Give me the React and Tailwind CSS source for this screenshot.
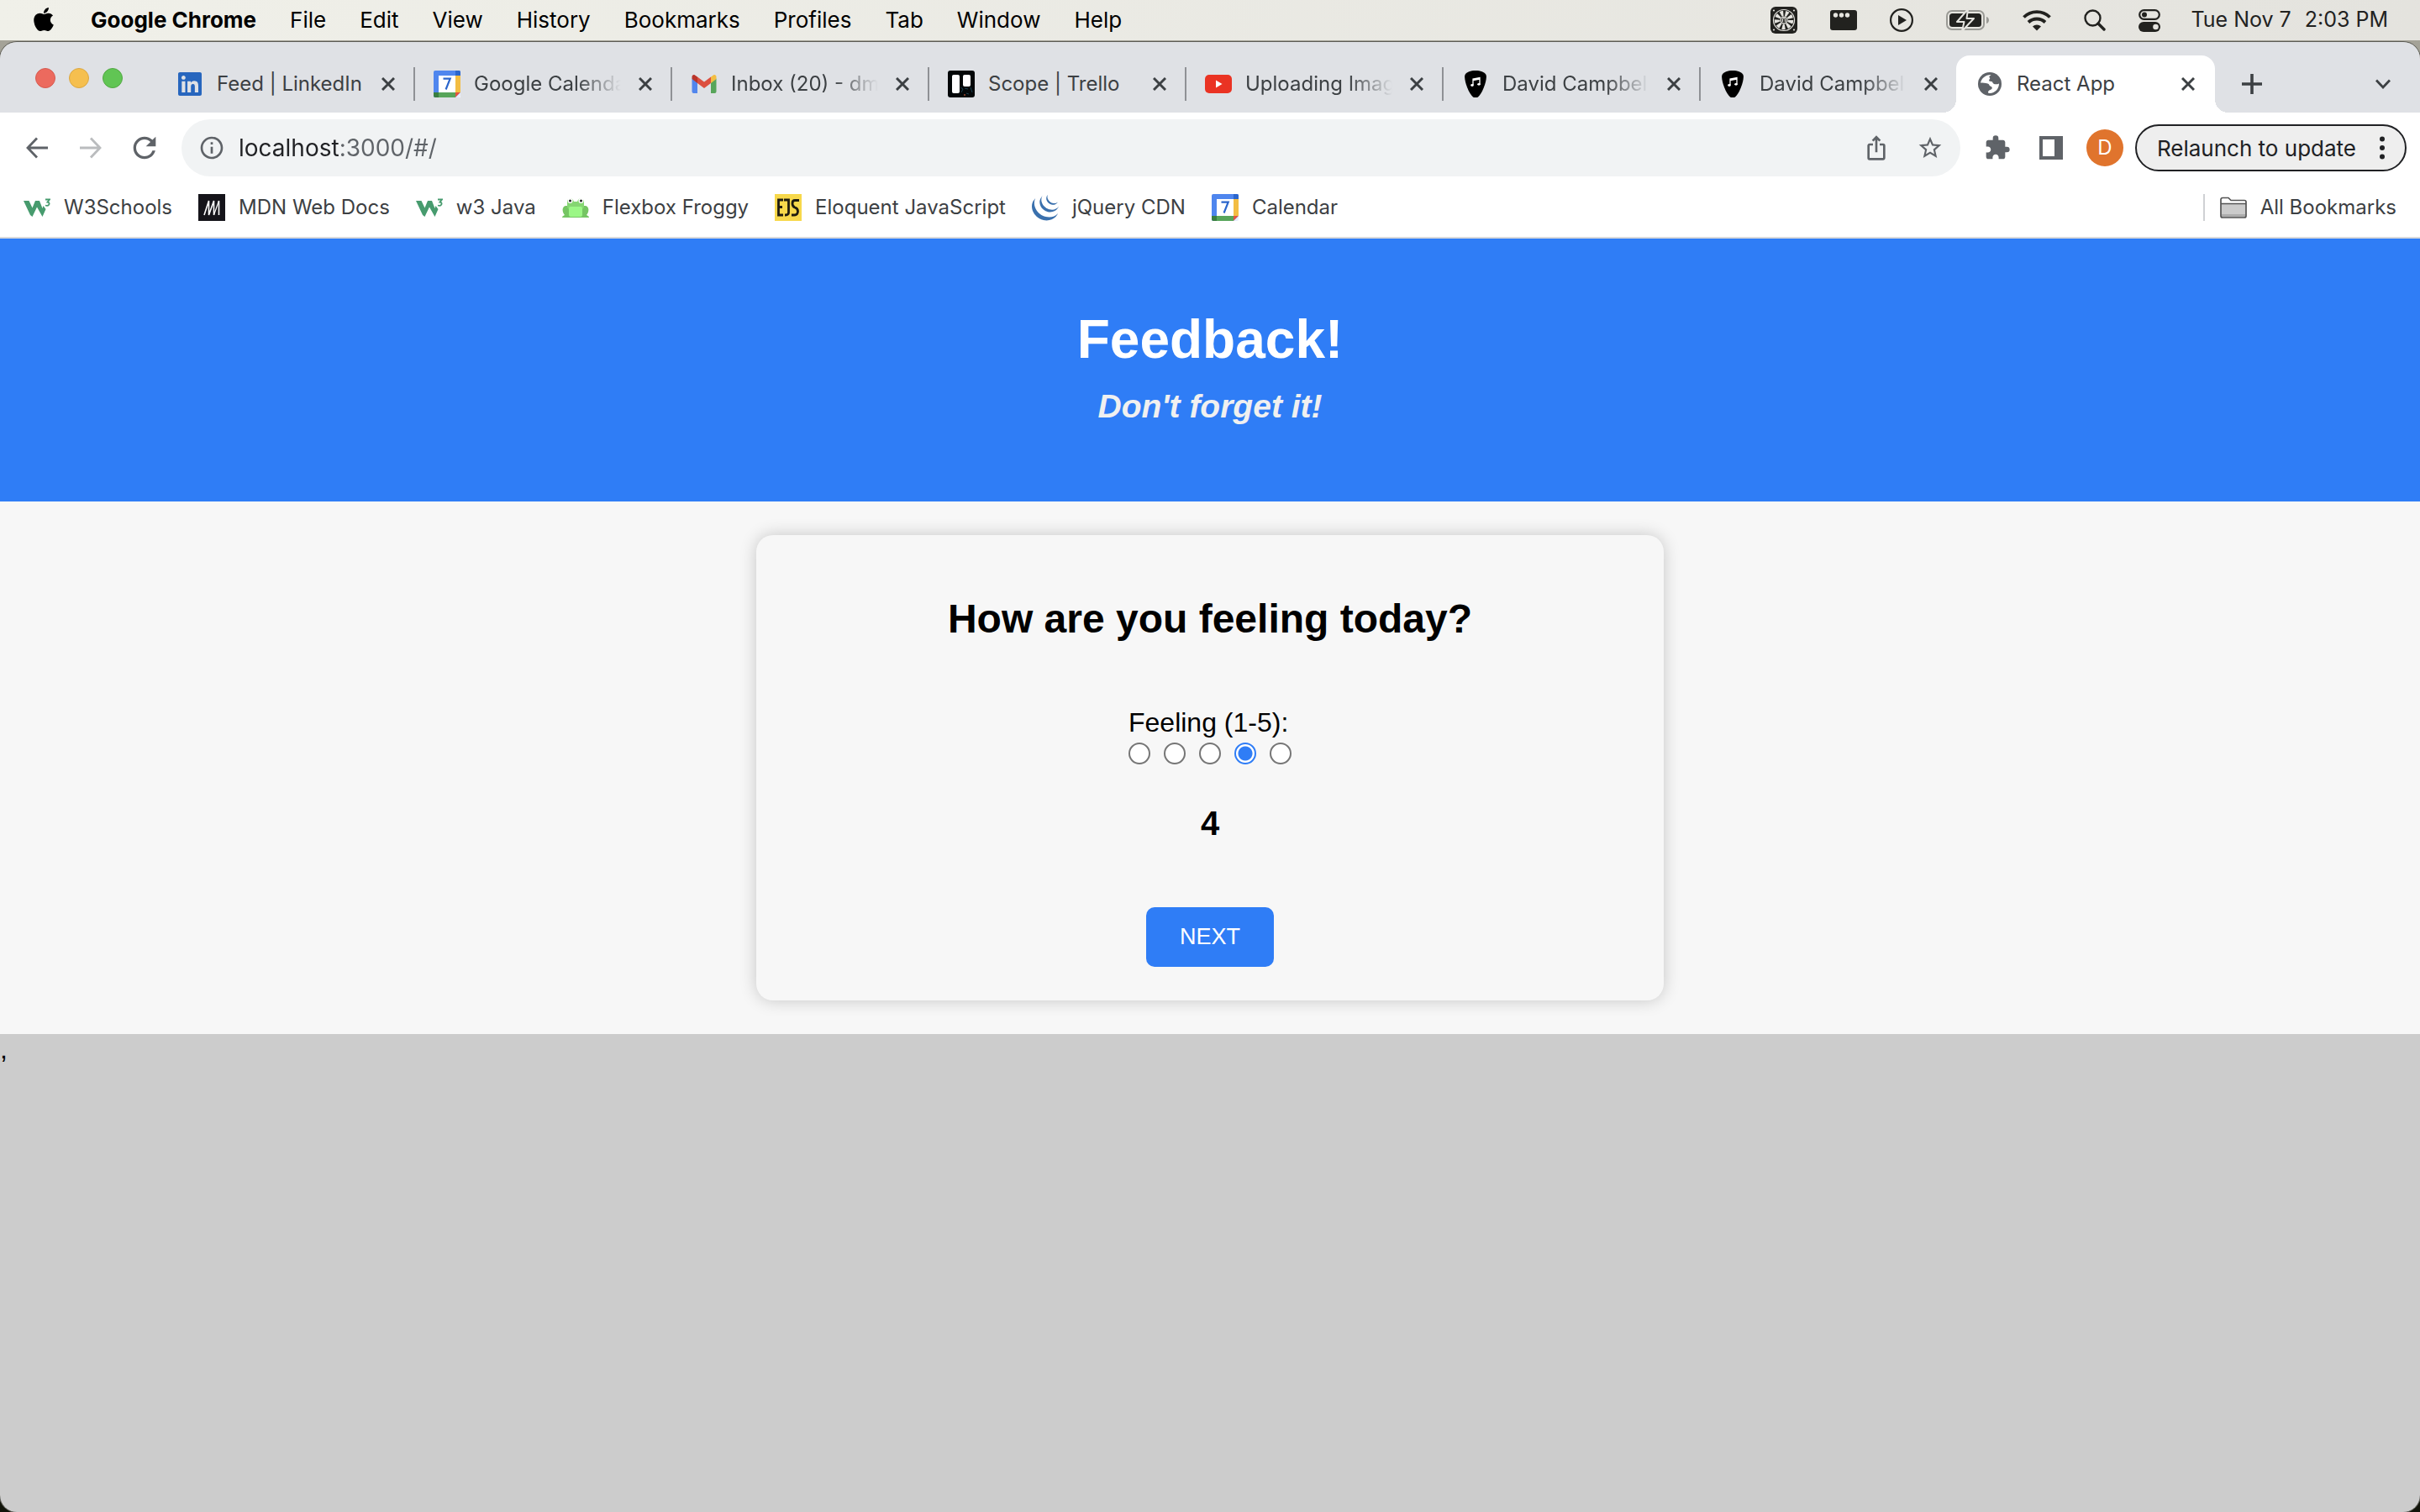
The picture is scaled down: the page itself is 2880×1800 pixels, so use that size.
import { useState } from "react";
import { FaApple, FaLinkedin } from "react-icons/fa";
import {
  MdExtension,
  MdInfoOutline,
  MdIosShare,
  MdRefresh,
  MdStarBorder,
} from "react-icons/md";
import { SiJquery } from "react-icons/si";

function GoogleCalendarIcon() {
  return (
    <svg viewBox="0 0 32 32" className="size-8 shrink-0" aria-hidden="true">
      <rect width="32" height="32" rx="2" fill="#4f86ee" />
      <path d="M26 0h4a2 2 0 0 1 2 2v4h-6z" fill="#2b66cc" />
      <path d="M26 6h6v20h-6z" fill="#f3bd42" />
      <path d="M6 26h20v6H6z" fill="#57a55a" />
      <path d="M0 26h6v6H2a2 2 0 0 1-2-2z" fill="#397e41" />
      <path d="M26 26h6l-6 6z" fill="#e25241" />
      <path d="M32 26v6h-6z" fill="#fff" fillOpacity="0.85" />
      <rect x="6" y="6" width="20" height="20" fill="#fff" />
      <path d="M11.5 9.6h8.2L14.6 22.5" fill="none" stroke="#2b66cc" strokeWidth="2.2" />
    </svg>
  );
}

function GmailIcon() {
  return (
    <svg viewBox="0 0 32 32" className="size-8 shrink-0" aria-hidden="true">
      <path d="M1.5 9.5 8 14v13H3.5a2 2 0 0 1-2-2z" fill="#5286ed" />
      <path d="M30.500 9.500 24 14v13h4.500a2 2 0 0 0 2-2z" fill="#57a55a" />
      <path d="M24 7.500 27 5.500c1.500-1 3.500 0 3.500 2V10L24 15z" fill="#f3bd42" />
      <path d="M8 7.500 16 13.500l8-6V15l-8 6-8-6z" fill="#dc4f3f" />
      <path d="M1.500 7.500c0-2 2-3 3.500-2L8 7.500V15l-6.500-5z" fill="#b9352b" />
    </svg>
  );
}

function TrelloIcon() {
  return (
    <svg viewBox="0 0 32 32" className="size-8 shrink-0" aria-hidden="true">
      <rect width="32" height="32" rx="3" fill="#030708" />
      <path d="M15 20l3 2-2 4M20 21l4 1M27 20l2 6M22 27l3 1" stroke="#1c4050" strokeWidth="1" fill="none" />
      <rect x="5" y="5" width="9" height="22" rx="2" fill="#fff" />
      <rect x="18" y="5" width="9" height="14" rx="2" fill="#fff" />
      <circle cx="20" cy="29" r="1" fill="#a04a30" />
    </svg>
  );
}

function YoutubeIcon() {
  return (
    <svg viewBox="0 0 32 32" className="size-8 shrink-0" aria-hidden="true">
      <rect y="5" width="32" height="22" rx="5" fill="#ea3323" />
      <path d="M13 11.500v9l7.500-4.500z" fill="#fff" />
    </svg>
  );
}

function PickIcon() {
  return (
    <svg viewBox="0 0 32 32" className="size-8 shrink-0" aria-hidden="true">
      <path d="M16 0c6 0 10.500 1.500 12.500 5 2 5-4 22-9.500 26.500-1.500 1-4.500 1-6 0C7.500 27 1.500 10 3.500 5 5.500 1.500 10 0 16 0z" fill="#000" />
      <path d="M13 17V10l8-1.500v7.500M13 11.500l8-1.500" stroke="#fff" strokeWidth="1.300" fill="none" />
      <ellipse cx="12" cy="17.500" rx="1.800" ry="1.400" fill="#fff" />
      <ellipse cx="20" cy="16.300" rx="1.800" ry="1.400" fill="#fff" />
    </svg>
  );
}

function GlobeIcon() {
  return (
    <svg viewBox="0 0 28 28" className="mx-0.5 size-7 shrink-0" aria-hidden="true">
      <circle cx="14" cy="14" r="14" fill="#5f6368" />
      <path
        d="M3 12.500C4 7.500 8.500 3 15.500 3C13.500 5 12.500 5.500 14 6.500C15 7.500 13 8.500 13 10C14 11.500 17 10 17.500 12.500C18.500 14.500 22 15 25 13.500C25 19.500 20.500 24.800 14 25C12.500 25 12 24.500 12 23.500C12.500 22 13 21.500 15.500 20.500C18 19 16.500 17 14.500 16.500C13 15.500 13.500 14 11.500 13.500C8.500 12.800 6 12.800 3 12.500Z"
        fill="#fff"
      />
    </svg>
  );
}

function W3Icon() {
  return (
    <svg viewBox="0 0 32 32" className="size-8 shrink-0" aria-hidden="true">
      <path d="M0 8h6.500l4 8.500L14 8h5l3.500 9 1-3 3 4-4 9-6.500-11.500L10.500 27 8 25z" fill="#479b6e" />
      <path d="M26 6.500h5l-2.500 3c3.500.5 2.500 5.500-2.500 4" fill="none" stroke="#479b6e" strokeWidth="1.800" />
    </svg>
  );
}

function MdnIcon() {
  return (
    <svg viewBox="0 0 32 32" className="size-8 shrink-0" aria-hidden="true">
      <rect width="32" height="32" fill="#15141a" />
      <path d="M7 25 12.500 8V25L18.500 8V25M24.500 8V25" fill="none" stroke="#fff" strokeWidth="1.600" />
      <path d="M18.500 25 24.500 8" fill="none" stroke="#fff" strokeWidth="1.200" />
    </svg>
  );
}

function FrogIcon() {
  return (
    <svg viewBox="0 0 32 32" className="size-8 shrink-0" aria-hidden="true">
      <path d="M0 28c0-2 2-2 3-3-4-5-3-12 3-11h20c6-1 7 6 3 11 1 1 3 1 3 3z" fill="#75c563" />
      <path d="M6 8a4 4 0 0 1 7-1l1 2h4l1-2a4 4 0 0 1 7 1v8l-3 3H9l-3-3z" fill="#85d672" />
      <rect x="8" y="15" width="16" height="12" rx="2" fill="#9bf786" />
      <circle cx="9.500" cy="8" r="3" fill="#fff" />
      <circle cx="22.500" cy="8" r="3" fill="#fff" />
      <circle cx="9.500" cy="8" r="1.500" fill="#222" />
      <circle cx="22.500" cy="8" r="1.500" fill="#222" />
    </svg>
  );
}

function EjsIcon() {
  return (
    <svg viewBox="0 0 32 32" className="size-8 shrink-0" aria-hidden="true">
      <rect width="32" height="32" fill="#f7d84b" />
      <path d="M10 7H4.500v18H10M4.500 15.500H9M11 7h5.500v15c0 2-1.500 3-4.500 3M29 7.500h-5c-4 0-4 7 0 8.500 5 1.500 4.500 9-1 9h-3" fill="none" stroke="#1f1c10" strokeWidth="2.800" />
    </svg>
  );
}

function FolderIcon() {
  return (
    <svg viewBox="0 0 32 32" className="size-8 shrink-0" aria-hidden="true">
      <path d="M1 12h30v14a2 2 0 0 1-2 2H3a2 2 0 0 1-2-2z" fill="#cbcbcb" />
      <path d="M2 24h28v3H2z" fill="#adadad" />
      <path d="M1 26V6.500a2 2 0 0 1 2-2h7l3 3h16a2 2 0 0 1 2 2V26a2 2 0 0 1-2 2H3a2 2 0 0 1-2-2zM1 11.500h30" fill="none" stroke="#545454" strokeWidth="1.700" />
    </svg>
  );
}

function FanIcon() {
  return (
    <svg viewBox="0 0 32 32" className="size-8" aria-hidden="true">
      <rect width="32" height="32" rx="6" fill="#22221f" />
      <circle cx="16" cy="16" r="12.500" fill="none" stroke="#e5e4df" strokeWidth="1.200" />
      <circle cx="16" cy="16" r="8" fill="none" stroke="#e5e4df" strokeWidth="6.500" strokeDasharray="3.300 2.280" />
      <circle cx="16" cy="16" r="3.800" fill="#22221f" stroke="#e5e4df" strokeWidth="1.300" />
      <path d="M14.500 18v-3a1.500 1.500 0 0 1 3 0v3" fill="none" stroke="#e5e4df" strokeWidth="1.200" />
      <g fill="#e5e4df">
        <circle cx="4" cy="4.500" r="1.100" />
        <circle cx="28" cy="4.500" r="1.100" />
        <circle cx="4" cy="27.500" r="1.100" />
        <circle cx="28" cy="27.500" r="1.100" />
      </g>
    </svg>
  );
}

function DotsWindowIcon() {
  return (
    <svg viewBox="0 0 32 24" className="h-6 w-8" aria-hidden="true">
      <rect width="32" height="24" rx="3" fill="#22221f" />
      <circle cx="6.500" cy="6" r="2.700" fill="#e5e4df" />
      <circle cx="13.500" cy="6" r="2.700" fill="#e5e4df" />
      <circle cx="20.500" cy="6" r="2.700" fill="#e5e4df" />
    </svg>
  );
}

function PlayIcon() {
  return (
    <svg viewBox="0 0 28 28" className="size-7" aria-hidden="true">
      <circle cx="14" cy="14" r="12.900" fill="none" stroke="#22221f" strokeWidth="2.200" />
      <path d="M10 8v12l10-6z" fill="#22221f" />
    </svg>
  );
}

function BatteryIcon() {
  return (
    <svg viewBox="0 0 52 28" className="h-7 w-[52px]" aria-hidden="true">
      <rect x="1" y="3" width="44" height="22" rx="6" fill="none" stroke="#9a9a95" strokeWidth="2" />
      <rect x="4" y="6" width="38" height="16" rx="3.500" fill="#22221f" />
      <path d="M48 10c4 1 4 7 0 8z" fill="#9a9a95" />
      <path d="M26 1 13 16h8.500L19 27 33 12h-8.500z" fill="#22221f" stroke="#e5e4df" strokeWidth="2" strokeLinejoin="round" />
    </svg>
  );
}

function WifiIcon() {
  return (
    <svg viewBox="0 0 34 26" className="h-[26px] w-[34px]" aria-hidden="true">
      <g fill="none" stroke="#22221f" strokeWidth="3.800">
        <path d="M1.500 9.500a22 22 0 0 1 31 0" />
        <path d="M7 15.500a14.500 14.500 0 0 1 20 0" />
      </g>
      <path d="M12 20.500a7.500 7.500 0 0 1 10 0L17 25.500z" fill="#22221f" />
    </svg>
  );
}

function SearchIcon() {
  return (
    <svg viewBox="0 0 26 26" className="size-[26px]" aria-hidden="true">
      <circle cx="10.500" cy="10.500" r="9" fill="none" stroke="#22221f" strokeWidth="2.400" />
      <path d="M17 17l7 7" stroke="#22221f" strokeWidth="3.400" strokeLinecap="round" />
    </svg>
  );
}

function ControlCenterIcon() {
  return (
    <svg viewBox="0 0 26 28" className="h-7 w-[26px]" aria-hidden="true">
      <rect x="1.200" y="2.200" width="23.600" height="10.600" rx="5.300" fill="none" stroke="#22221f" strokeWidth="2.200" />
      <circle cx="7" cy="7.500" r="3" fill="#22221f" />
      <rect y="16" width="26" height="12" rx="6" fill="#22221f" />
      <circle cx="20.500" cy="22" r="3.300" fill="#e5e4df" />
    </svg>
  );
}

function CloseIcon() {
  return (
    <svg viewBox="0 0 16 16" className="size-4" aria-hidden="true">
      <path d="M1 1l14 14M15 1 1 15" stroke="#3c4043" strokeWidth="3" />
    </svg>
  );
}

function ArrowIcon({ className }) {
  return (
    <svg viewBox="0 0 26 26" className={className} aria-hidden="true">
      <path d="M13 1.500 2 13l11 11.500M2 13h24" fill="none" stroke="currentColor" strokeWidth="2.800" />
    </svg>
  );
}

const menus = ["File", "Edit", "View", "History", "Bookmarks", "Profiles", "Tab", "Window", "Help"];

const tabs = [
  { title: "Feed | LinkedIn", icon: <FaLinkedin className="size-8 shrink-0 text-[#2766be]" /> },
  { title: "Google Calenda", icon: <GoogleCalendarIcon />, fade: true },
  { title: "Inbox (20) - dm", icon: <GmailIcon />, fade: true },
  { title: "Scope | Trello", icon: <TrelloIcon /> },
  { title: "Uploading Imag", icon: <YoutubeIcon />, fade: true },
  { title: "David Campbel", icon: <PickIcon />, fade: true },
  { title: "David Campbel", icon: <PickIcon />, fade: true },
];

const bookmarks = [
  { title: "W3Schools", icon: <W3Icon /> },
  { title: "MDN Web Docs", icon: <MdnIcon /> },
  { title: "w3 Java", icon: <W3Icon /> },
  { title: "Flexbox Froggy", icon: <FrogIcon /> },
  { title: "Eloquent JavaScript", icon: <EjsIcon /> },
  { title: "jQuery CDN", icon: <SiJquery className="size-8 shrink-0 text-[#3a70ad]" /> },
  { title: "Calendar", icon: <GoogleCalendarIcon /> },
];

function MenuBar() {
  return (
    <header className="flex h-12 shrink-0 items-center justify-between bg-linear-to-r from-[#f0f0e9] to-[#e4e3de] pr-[38px] pl-9 text-[26px] text-black">
      <nav className="flex items-center gap-10 pb-0.5" aria-label="Application menu">
        <button aria-label="Apple menu">
          <FaApple className="size-8" />
        </button>
        <button className="font-bold">Google Chrome</button>
        {menus.map((menu) => (
          <button key={menu}>{menu}</button>
        ))}
      </nav>
      <div className="flex items-center">
        <div className="mr-9 flex items-center gap-[39px]">
          <FanIcon />
          <DotsWindowIcon />
          <PlayIcon />
          <BatteryIcon />
          <WifiIcon />
          <SearchIcon />
          <ControlCenterIcon />
        </div>
        <time className="flex gap-4 text-[25px] text-[#22221f]">
          <span>Tue Nov 7</span>
          <span>2:03 PM</span>
        </time>
      </div>
    </header>
  );
}

function Tab({ title, icon, fade, last }) {
  return (
    <div className="flex h-[68px] w-[306px] min-w-0 items-center pl-[22px]">
      {icon}
      <span
        className={
          fade
            ? "ml-4 min-w-0 flex-1 whitespace-nowrap [mask-image:linear-gradient(to_right,black_70%,transparent)]"
            : "ml-4 min-w-0 flex-1 whitespace-nowrap"
        }
      >
        {title}
      </span>
      <button className="mr-[22px] ml-[21px]" aria-label={`Close ${title}`}>
        <CloseIcon />
      </button>
      <span className={last ? "h-10 w-0.5 shrink-0" : "h-10 w-0.5 shrink-0 bg-[#8f9195]"} />
    </div>
  );
}

function TabStrip() {
  return (
    <div className="flex items-center bg-[#dfe1e5] pt-4 text-[24px] text-[#3c4043]">
      <div className="mr-[42px] mb-[14px] ml-[42px] flex gap-4">
        <button className="size-6 rounded-full border border-[#d65a50] bg-[#ec6a5e]" aria-label="Close window" />
        <button className="size-6 rounded-full border border-[#dba742] bg-[#f5bf4f]" aria-label="Minimize window" />
        <button className="size-6 rounded-full border border-[#52a843] bg-[#61c554]" aria-label="Zoom window" />
      </div>
      <div className="flex min-w-0">
        {tabs.map((tab, i) => (
          <Tab key={i} {...tab} last={i === tabs.length - 1} />
        ))}
      </div>
      <div className="relative -ml-0.5 flex h-[68px] w-[308px] shrink-0 items-center rounded-t-[16px] bg-white pl-6">
        <span className="absolute bottom-0 -left-4 size-4 bg-[radial-gradient(circle_at_0_0,transparent_16px,white_16px)]" />
        <span className="absolute -right-4 bottom-0 size-4 bg-[radial-gradient(circle_at_100%_0,transparent_16px,white_16px)]" />
        <GlobeIcon />
        <span className="ml-4 flex-1">React App</span>
        <button className="mr-6" aria-label="Close React App">
          <CloseIcon />
        </button>
      </div>
      <button className="ml-8" aria-label="New tab">
        <svg viewBox="0 0 24 24" className="size-6" aria-hidden="true">
          <path d="M12 0v24M0 12h24" stroke="#3c4043" strokeWidth="3.600" />
        </svg>
      </button>
      <button className="mr-[35px] ml-auto" aria-label="Search tabs">
        <svg viewBox="0 0 18 12" className="h-3 w-[18px]" aria-hidden="true">
          <path d="M1 1.500l8 8.500 8-8.500" fill="none" stroke="#3c4043" strokeWidth="2.800" />
        </svg>
      </button>
    </div>
  );
}

function Toolbar() {
  return (
    <div className="flex items-center bg-white py-2 pr-4 pl-[31px] text-[#5f6368]">
      <button aria-label="Back">
        <ArrowIcon className="size-[26px] text-[#5f6368]" />
      </button>
      <button className="ml-[38px]" aria-label="Forward">
        <ArrowIcon className="size-[26px] rotate-180 text-[#babcbe]" />
      </button>
      <button className="ml-[31px]" aria-label="Reload">
        <MdRefresh className="size-10" />
      </button>
      <div className="ml-6 flex h-[68px] flex-1 items-center rounded-full bg-[#f1f3f4] px-5">
        <MdInfoOutline className="size-8" />
        <input
          className="ml-4 min-w-0 flex-1 bg-[linear-gradient(to_right,#202124_121px,#5f6368_121px)] bg-clip-text text-[28px] text-transparent outline-none"
          aria-label="Address"
          defaultValue="localhost:3000/#/"
        />
        <button aria-label="Share">
          <MdIosShare className="size-8" />
        </button>
        <button className="ml-8" aria-label="Bookmark this page">
          <MdStarBorder className="size-8" />
        </button>
      </div>
      <button className="ml-7" aria-label="Extensions">
        <MdExtension className="size-8" />
      </button>
      <button className="ml-[34px]" aria-label="Side panel">
        <svg viewBox="0 0 28 28" className="size-7" aria-hidden="true">
          <path d="M0 0h28v28H0zM4 4v20h14V4z" fill="currentColor" fillRule="evenodd" />
        </svg>
      </button>
      <button className="ml-7 size-11 rounded-full bg-[#e0742d] text-[24px] text-white" aria-label="Profile D">
        D
      </button>
      <button className="ml-[14px] flex h-14 items-center rounded-full border-2 border-[#202124] bg-[#eeeeee] pr-6 pl-6 text-[26px] text-[#202124]">
        Relaunch to update
        <svg viewBox="0 0 6 28" className="ml-7 h-7 w-1.5" aria-hidden="true">
          <g fill="#202124">
            <circle cx="3" cy="3.500" r="3" />
            <circle cx="3" cy="14" r="3" />
            <circle cx="3" cy="24.500" r="3" />
          </g>
        </svg>
      </button>
    </div>
  );
}

function BookmarksBar() {
  return (
    <nav
      className="flex h-[66px] items-center gap-[31px] bg-white pr-7 pb-2 pl-7 text-[24px] text-[#3c4043] shadow-[inset_0_-2px_0_#d9dadc]"
      aria-label="Bookmarks"
    >
      {bookmarks.map(({ title, icon }) => (
        <a key={title} href="#/" className="flex items-center gap-4 whitespace-nowrap">
          {icon}
          {title}
        </a>
      ))}
      <button className="ml-auto flex items-center whitespace-nowrap">
        <span className="mr-[18px] h-8 w-0.5 bg-[#cfd1d4]" />
        <FolderIcon />
        <span className="ml-4">All Bookmarks</span>
      </button>
    </nav>
  );
}

function FeedbackPage() {
  const [feeling, setFeeling] = useState(4);
  return (
    <div className="flex flex-1 flex-col bg-[#cccccc] font-['Liberation_Sans',Arial,sans-serif] text-black">
      <header className="bg-[#2f7df6] pt-[83px] pb-[90px] text-center font-bold">
        <h1 className="text-[64px] leading-[74px] text-white">Feedback!</h1>
        <h4 className="mt-5 text-[39px] leading-[46px] text-[#f0f0f0] italic">Don't forget it!</h4>
      </header>
      <main className="bg-[#f7f7f7] p-10">
        <form
          className="mx-auto flex max-w-[1080px] flex-col items-center rounded-[20px] bg-[#f7f7f7] pt-[72px] pb-10 shadow-[0_0_20px_rgba(0,0,0,0.2)]"
          onSubmit={(e) => e.preventDefault()}
        >
          <h2 className="text-[48px] leading-[56px] font-bold">How are you feeling today?</h2>
          <fieldset className="mt-[77px]">
            <legend className="text-[32px] leading-9">Feeling (1-5):</legend>
            <div className="mt-1.5 flex gap-4">
              {[1, 2, 3, 4, 5].map((n) => (
                <input
                  key={n}
                  type="radio"
                  name="feeling"
                  aria-label={`Feeling ${n}`}
                  className="size-[26px] appearance-none rounded-full border-2 border-[#767676] bg-white checked:border-[#2f7df6] checked:bg-[radial-gradient(circle,#2f7df6_8px,white_9px)]"
                  checked={feeling === n}
                  onChange={() => setFeeling(n)}
                />
              ))}
            </div>
          </fieldset>
          <h3 className="mt-[47px] text-[40px] leading-[46px] font-bold">{feeling}</h3>
          <button className="mt-[77px] h-[71px] rounded-[10px] bg-[#2f7df6] px-10 text-[27px] text-white">NEXT</button>
        </form>
      </main>
      <p className="text-[32px] leading-9">,</p>
    </div>
  );
}

export default function App() {
  return (
    <div className="flex min-h-screen flex-col bg-linear-to-b from-[#a9a79c] to-[#11140a] font-['Inter',sans-serif]">
      <MenuBar />
      <div className="mt-0.5 flex flex-1 flex-col overflow-hidden rounded-[20px] shadow-[0_0_0_1px_#5c5c55]">
        <TabStrip />
        <Toolbar />
        <BookmarksBar />
        <FeedbackPage />
      </div>
    </div>
  );
}
